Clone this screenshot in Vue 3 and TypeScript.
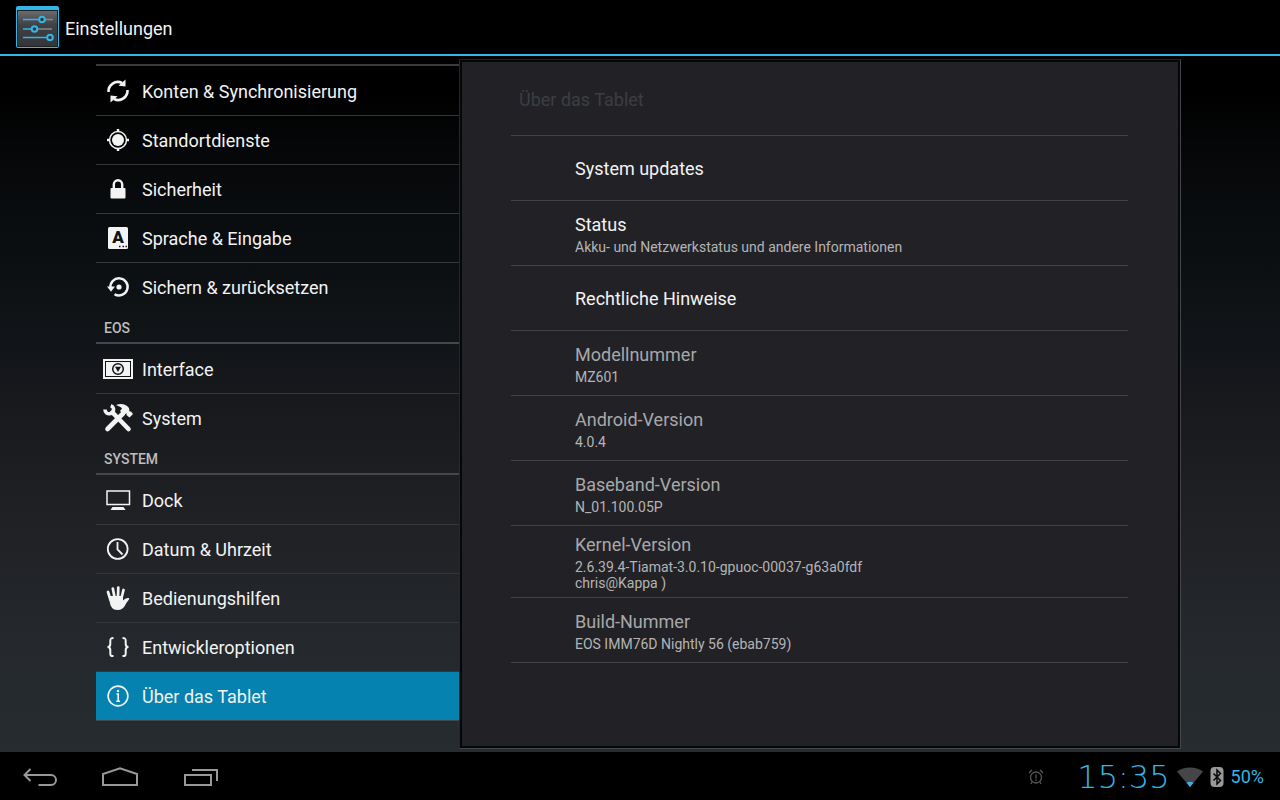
<script setup lang="ts">
import { ref } from 'vue'

interface NavItem {
  id: string
  label: string
}

interface NavGroup {
  title: string
  items: NavItem[]
}

interface DetailRow {
  title: string
  lines: string[]
  enabled: boolean
}

const groups: NavGroup[] = [
  {
    title: '',
    items: [
      { id: 'sync', label: 'Konten & Synchronisierung' },
      { id: 'location', label: 'Standortdienste' },
      { id: 'security', label: 'Sicherheit' },
      { id: 'language', label: 'Sprache & Eingabe' },
      { id: 'backup', label: 'Sichern & zurücksetzen' },
    ],
  },
  {
    title: 'EOS',
    items: [
      { id: 'interface', label: 'Interface' },
      { id: 'tools', label: 'System' },
    ],
  },
  {
    title: 'SYSTEM',
    items: [
      { id: 'dock', label: 'Dock' },
      { id: 'time', label: 'Datum & Uhrzeit' },
      { id: 'access', label: 'Bedienungshilfen' },
      { id: 'dev', label: 'Entwickleroptionen' },
      { id: 'about', label: 'Über das Tablet' },
    ],
  },
]

const details: DetailRow[] = [
  { title: 'System updates', lines: [], enabled: true },
  { title: 'Status', lines: ['Akku- und Netzwerkstatus und andere Informationen'], enabled: true },
  { title: 'Rechtliche Hinweise', lines: [], enabled: true },
  { title: 'Modellnummer', lines: ['MZ601'], enabled: false },
  { title: 'Android-Version', lines: ['4.0.4'], enabled: false },
  { title: 'Baseband-Version', lines: ['N_01.100.05P'], enabled: false },
  { title: 'Kernel-Version', lines: ['2.6.39.4-Tiamat-3.0.10-gpuoc-00037-g63a0fdf', 'chris@Kappa )'], enabled: false },
  { title: 'Build-Nummer', lines: ['EOS IMM76D Nightly 56 (ebab759)'], enabled: false },
]

const selected = ref('about')
</script>

<template>
  <div class="screen">
    <header class="action-bar">
      <svg class="app-icon" viewBox="0 0 44 42" aria-hidden="true">
        <defs>
          <linearGradient id="tile" x1="0" y1="0" x2="0" y2="1">
            <stop offset="0" stop-color="#6a6b6e" />
            <stop offset="0.4" stop-color="#404144" />
            <stop offset="1" stop-color="#343538" />
          </linearGradient>
        </defs>
        <rect x="0" y="0" width="43" height="42" rx="2" fill="#33b5e5" />
        <rect x="1" y="4" width="41" height="37" fill="#1c2124" />
        <rect x="2" y="5" width="39" height="35" fill="url(#tile)" />
        <g fill="none" stroke-width="1.3">
          <path d="M29 13.5H37M22 23H36" stroke="#85878a" />
          <path d="M7 13.5H23M7 23H16M7 31.500H31" stroke="#33b5e5" />
        </g>
        <g fill="#33393d" stroke="#33b5e5" stroke-width="2">
          <circle cx="26" cy="13.500" r="2.800" />
          <circle cx="18.500" cy="23" r="2.800" />
          <circle cx="34" cy="31.500" r="2.800" />
        </g>
      </svg>
      <h1>Einstellungen</h1>
    </header>

    <main class="content">
      <nav class="sidebar">
        <section v-for="group in groups" :key="group.title" class="group">
          <h2 class="group-title" :class="{ bare: !group.title }">{{ group.title }}</h2>
          <button
            v-for="item in group.items"
            :key="item.id"
            type="button"
            class="nav-item"
            :class="{ selected: selected === item.id }"
            @click="selected = item.id"
          >
            <svg class="nav-icon" viewBox="0 0 30 30" aria-hidden="true">
              <g v-if="item.id === 'sync'">
                <path d="M5.500 16C5 9 12.500 3.500 19 7M24.500 14C25 21 17.500 26.500 11 23" fill="none" stroke="currentColor" stroke-width="2.600" />
                <path d="M22.500 3.500V10.500L15.500 9.800ZM7.500 26.500V19.500L14.500 20.200Z" fill="currentColor" />
              </g>
              <g v-else-if="item.id === 'location'">
                <circle cx="15" cy="15" r="8.500" fill="none" stroke="currentColor" stroke-width="1.500" />
                <circle cx="15" cy="15" r="6" fill="currentColor" />
                <path d="M15 4V7M15 23V26M4 15H7M23 15H26" fill="none" stroke="currentColor" stroke-width="2.500" />
              </g>
              <g v-else-if="item.id === 'security'">
                <rect x="7.500" y="14" width="15" height="10.500" rx="1" fill="currentColor" />
                <path d="M10.800 15V10.500A4.200 4.200 0 0 1 19.200 10.500V15" fill="none" stroke="currentColor" stroke-width="2.400" />
              </g>
              <g v-else-if="item.id === 'language'">
                <rect x="5" y="4" width="20" height="22" rx="1.500" fill="currentColor" />
                <text x="15" y="20" text-anchor="middle" class="key-letter">A</text>
                <path d="M16 23.500H17.500M19.500 23.500H21M22.500 23.500H24" stroke="#101316" stroke-width="1.500" />
              </g>
              <g v-else-if="item.id === 'backup'">
                <path d="M7.500 16A8.600 8.600 0 1 1 11.500 22.200" fill="none" stroke="currentColor" stroke-width="2.400" />
                <path d="M4 14.500H12L8 19.800Z" fill="currentColor" />
                <circle cx="16" cy="15" r="2.600" fill="currentColor" />
              </g>
              <g v-else-if="item.id === 'interface'">
                <rect x="0" y="5" width="30" height="20" fill="currentColor" />
                <rect x="2.500" y="7.500" width="25" height="15" fill="none" stroke="#101316" />
                <circle cx="15" cy="15" r="5.300" fill="none" stroke="#101316" stroke-width="1.500" />
                <path d="M12 12.800H18L15 18Z" fill="#101316" />
              </g>
              <g v-else-if="item.id === 'tools'">
                <path d="M9.500 9.500L25.500 26" fill="none" stroke="currentColor" stroke-width="4.600" stroke-linecap="round" />
                <path d="M2 6.500C2 12.500 11.500 12 10.500 5.500C10.200 4 9.200 3.200 7.800 2.600" fill="none" stroke="currentColor" stroke-width="3.600" />
                <path d="M20 10.500L4.500 26" fill="none" stroke="currentColor" stroke-width="4.600" stroke-linecap="round" />
                <path d="M13 2C18 0 23 1 26 5L26.500 8.500L28 8.500L30 11L26.500 14.500L23.500 12L23.500 10L21 12L17 8L19 5.500C17.500 3.500 15.500 3 13 2Z" fill="currentColor" />
              </g>
              <g v-else-if="item.id === 'dock'">
                <rect x="4" y="6" width="22.500" height="13.500" fill="none" stroke="currentColor" stroke-width="1.500" />
                <path d="M9.500 22H20.500L22.500 25H7.500Z" fill="currentColor" />
              </g>
              <g v-else-if="item.id === 'time'" fill="none" stroke="currentColor" stroke-width="1.800">
                <circle cx="14.700" cy="15" r="9.900" />
                <path d="M14.500 8V15.500L19.500 20.500" />
              </g>
              <g v-else-if="item.id === 'access'">
                <path d="M7.500 17L5 9M11.500 14L9.800 5.500M15 14L15.300 4.500M18.500 15L20.500 7" fill="none" stroke="currentColor" stroke-width="2.700" stroke-linecap="round" />
                <path d="M6 13L20 13L20 17.500C22 16 24 14.300 26.200 15.300C26.500 17 24 18.500 22.800 21C21 25 18.500 27 14.500 27C9.500 27 7.500 23.500 6.800 19Z" fill="currentColor" />
              </g>
              <g v-else-if="item.id === 'dev'" fill="none" stroke="currentColor" stroke-width="2">
                <path d="M10.500 6C7.500 6 7.300 6.800 7.300 9V12C7.300 14 6.500 15 4.500 15C6.500 15 7.300 16 7.300 18V21C7.300 23.500 7.500 24 10.500 24" />
                <path d="M19.500 6C22.500 6 22.700 6.800 22.700 9V12C22.700 14 23.500 15 25.500 15C23.500 15 22.700 16 22.700 18V21C22.700 23.500 22.500 24 19.500 24" />
              </g>
              <g v-else>
                <circle cx="15" cy="15" r="9.900" fill="none" stroke="currentColor" stroke-width="1.600" />
                <path d="M13.500 13H15.200V20M13.200 20.200H17" fill="none" stroke="currentColor" stroke-width="1.600" />
                <circle cx="15" cy="10" r="1.200" fill="currentColor" />
              </g>
            </svg>
            <span class="nav-label">{{ item.label }}</span>
          </button>
        </section>
      </nav>

      <section class="panel">
        <div class="panel-body">
          <h2 class="panel-title">Über das Tablet</h2>
          <ul class="details">
            <li v-for="row in details" :key="row.title">
              <button type="button" class="detail" :disabled="!row.enabled">
                <span class="detail-title">{{ row.title }}</span>
                <span v-if="row.lines.length" class="detail-summary">
                  <span v-for="line in row.lines" :key="line" class="detail-line">{{ line }}</span>
                </span>
              </button>
            </li>
          </ul>
        </div>
      </section>
    </main>

    <footer class="system-bar">
      <button type="button" class="soft-key" aria-label="Zurück">
        <svg viewBox="0 0 40 24" aria-hidden="true">
          <path d="M10.500 5L4.500 11L10.500 17M4.500 11H31A5 5 0 0 1 31 21H18.500" />
        </svg>
      </button>
      <button type="button" class="soft-key" aria-label="Startseite">
        <svg viewBox="0 0 40 24" aria-hidden="true">
          <path d="M3 21V10L20 4.200L37 10V21Z" />
        </svg>
      </button>
      <button type="button" class="soft-key" aria-label="Letzte Apps">
        <svg viewBox="0 0 40 24" aria-hidden="true">
          <path d="M5 11H31V21H5ZM12 6H37V17" />
        </svg>
      </button>

      <div class="status">
        <svg class="alarm" viewBox="0 0 16 16" aria-hidden="true">
          <g fill="none" stroke="#57585a" stroke-width="1.300">
            <circle cx="8" cy="8.500" r="5.500" />
            <path d="M1 4L4 1M15 4L12 1M8 5.500V9.500M8 10.500V12M4 13L3 15M12 13L13 15" />
          </g>
        </svg>
        <time class="clock">15:35</time>
        <svg class="wifi" viewBox="0 0 26 20" aria-hidden="true">
          <path d="M13 20L0 4.500C7 -1 19 -1 26 4.500Z" fill="#454649" />
          <path d="M13 20L9.500 15.800C11.500 14.300 14.500 14.300 16.500 15.800Z" fill="#33b5e5" />
        </svg>
        <svg class="bluetooth" viewBox="0 0 14 20" aria-hidden="true">
          <rect x="0.500" y="0" width="13" height="20" rx="4" fill="#98999b" />
          <path d="M3.500 6.500L10.500 13.500L7 17V3L10.500 6.500L3.500 13.500" fill="none" stroke="#08090a" stroke-width="1.500" />
        </svg>
        <span class="battery">50%</span>
      </div>
    </footer>
  </div>
</template>

<style>
body {
  margin: 0;
  background: #000;
}
</style>

<style scoped>
.screen {
  display: flex;
  flex-direction: column;
  min-height: 100vh;
  box-sizing: border-box;
  color: #f3f3f3;
  font-family: Roboto, "Noto Sans", sans-serif;
  font-size: 18px;
  line-height: 24px;
}

h1,
h2,
ul {
  margin: 0;
  padding: 0;
  font-size: 18px;
  font-weight: 400;
  list-style: none;
}

button {
  padding: 0;
  border: 0;
  background: none;
  color: inherit;
  font: inherit;
  text-align: left;
}

.action-bar {
  display: flex;
  align-items: center;
  gap: 5px;
  height: 54px;
  padding: 0 16px;
  background: #000;
  border-bottom: 2px solid #33b5e5;
}

.action-bar h1 {
  padding-top: 4px;
}

.app-icon {
  width: 44px;
  height: 42px;
}

.content {
  flex: 1;
  display: grid;
  grid-template-columns: minmax(0, 363fr) minmax(0, 722fr);
  padding: 3px 99px 3px 96px;
  background: linear-gradient(#000 0, #000 5%, #07090b 17%, #0e1215 35%, #16181c 48%, #1d1e22 60%, #212327 72%, #25292d 86%, #272c31 100%);
}

.sidebar {
  padding-top: 5px;
}

.group-title {
  height: 30px;
  padding-left: 8px;
  border-bottom: 2px solid #46474a;
  color: #bebebe;
  font-size: 14px;
  font-weight: 500;
  line-height: 32px;
}

.group:not(:first-child) {
  padding-top: 1px;
}

.group-title.bare {
  height: 0;
  border-color: #393b3e;
}

.nav-item {
  display: flex;
  align-items: center;
  gap: 9px;
  width: 100%;
  height: 49px;
  padding-left: 7px;
  border-top: 1px solid #35373a;
}

.group-title + .nav-item {
  border-top-color: transparent;
}

.nav-item.selected {
  height: 50px;
  background: #0682b0;
  border-bottom: 1px solid #46474a;
}

.nav-icon {
  width: 30px;
  height: 30px;
}

.nav-label {
  padding-top: 2px;
}

.key-letter {
  fill: #101316;
  font-size: 17px;
  font-weight: 900;
}

.panel {
  display: flex;
  padding: 2px;
  background: #060708;
  border: 1px solid #45464a;
  border-top-color: #1c2023;
  border-left-color: #25282b;
}

.panel-body {
  flex: 1;
  padding: 0 50px 0 49px;
  background: #222226;
}

.panel-title {
  padding: 26px 8px 23px;
  border-bottom: 1px solid #424347;
  color: #3c3e41;
}

.detail {
  display: flex;
  flex-direction: column;
  justify-content: center;
  gap: 2px;
  width: 100%;
  min-height: 65px;
  padding: 7px 64px 6px;
  border-bottom: 1px solid #424347;
}

.detail:disabled {
  color: #a8a8aa;
}

.detail-summary {
  display: flex;
  flex-direction: column;
  color: #b4b4b6;
  font-size: 14px;
  line-height: 16px;
}

.system-bar {
  display: flex;
  align-items: center;
  height: 48px;
  background: #000;
}

.soft-key {
  display: flex;
  justify-content: center;
  width: 80px;
}

.soft-key svg {
  width: 40px;
  height: 24px;
  fill: none;
  stroke: #98999b;
  stroke-width: 2;
}

.status {
  display: flex;
  align-items: center;
  gap: 7px;
  margin-left: auto;
  padding: 2px 16px 0 0;
  color: #33b5e5;
}

.alarm {
  width: 16px;
  height: 16px;
  margin-right: 26px;
}

.clock {
  font-family: "DejaVu Sans Light", "DejaVu Sans", sans-serif;
  font-size: 32px;
  font-weight: 200;
}

.wifi {
  width: 26px;
  height: 20px;
}

.bluetooth {
  width: 14px;
  height: 20px;
}
</style>
